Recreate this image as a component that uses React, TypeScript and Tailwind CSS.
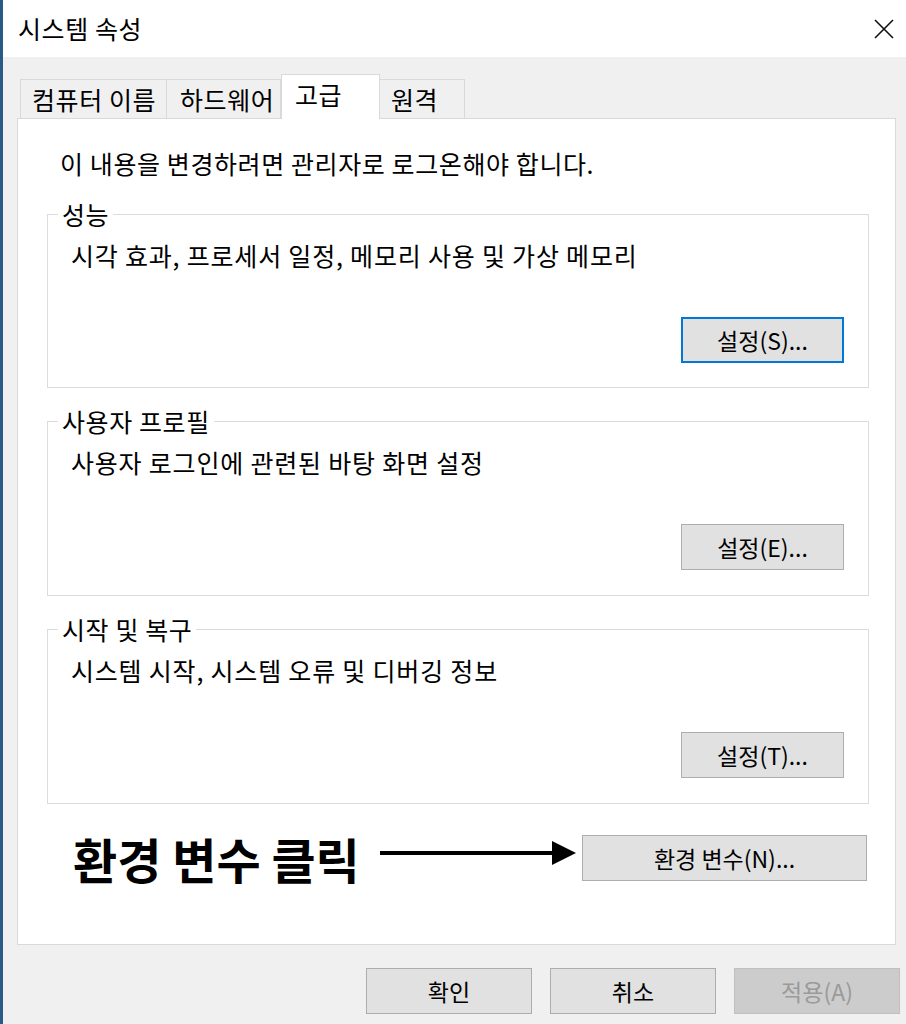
import React from 'react';

const tabs = [
  { label: '컴퓨터 이름', w: 'w-[147px]', pl: 'pl-[11px]' },
  { label: '하드웨어', w: 'w-[115px]', pl: 'pl-[13px]' },
];

const groups = [
  { title: '성능', desc: '시각 효과, 프로세서 일정, 메모리 사용 및 가상 메모리', btn: '설정(S)...', focused: true },
  { title: '사용자 프로필', desc: '사용자 로그인에 관련된 바탕 화면 설정', btn: '설정(E)...', focused: false },
  { title: '시작 및 복구', desc: '시스템 시작, 시스템 오류 및 디버깅 정보', btn: '설정(T)...', focused: false },
];

function WinButton({ label, focused, disabled, className }: { label: string; focused?: boolean; disabled?: boolean; className?: string }) {
  const base = 'flex items-center justify-center text-[23px] leading-none';
  const look = disabled
    ? 'bg-[#cccccc] border border-[#bfbfbf] text-[#9a9a9a]'
    : focused
      ? 'bg-[#e1e1e1] border-2 border-[#0078d7] text-black'
      : 'bg-[#e1e1e1] border border-[#adadad] text-black';
  return <div className={`${base} ${look} ${className ?? ''}`}>{label}</div>;
}

export default function App() {
  return (
    <div className="w-[906px] h-[1024px] overflow-hidden border-l-[3px] border-[#2b5a86] bg-[#f0f0f0] font-['Noto_Sans_CJK_KR','Noto_Sans',sans-serif] text-black">
      {/* Title bar */}
      <div className="h-[57px] bg-white flex items-center justify-between pl-[15px] pr-[10px]">
        <span className="text-[25px] leading-none tracking-[0.6px]">시스템 속성</span>
        <svg width="22" height="22" viewBox="0 0 22 22" className="mr-[1px]">
          <path d="M2 2 L20 20 M20 2 L2 20" stroke="#111" strokeWidth="1.6" />
        </svg>
      </div>

      {/* Tabs */}
      <div className="pt-[16px] pl-[17px] flex items-end h-[61px]">
        {tabs.map((t, i) => (
          <div
            key={t.label}
            className={`${t.w} ${t.pl} ${i > 0 ? '-ml-px' : ''} h-[39px] border border-b-0 border-[#d9d9d9] bg-[#f0f0f0] flex items-center text-[25px] leading-none tracking-[0.6px]`}
          >
            {t.label}
          </div>
        ))}
        <div className="relative z-10 w-[99px] h-[45px] -mb-px border border-b-0 border-[#d9d9d9] bg-white flex items-start pt-[5px] pl-[13px] text-[25px] leading-[28px] tracking-[0.6px]">
          고급
        </div>
        <div className="w-[86px] h-[39px] -ml-px border border-b-0 border-[#d9d9d9] bg-[#f0f0f0] flex items-center pl-[11px] text-[25px] leading-none tracking-[0.6px]">
          원격
        </div>
      </div>

      {/* Panel */}
      <div className="ml-[14px] w-[879px] h-[827px] bg-white border border-[#d9d9d9] pt-[28px] pl-[29px]">
        <p className="ml-[13px] text-[25px] leading-[32px] tracking-[0.6px]">이 내용을 변경하려면 관리자로 로그온해야 합니다.</p>

        {groups.map((g, i) => (
          <fieldset
            key={g.title}
            className={`${i === 0 ? 'mt-[19px] h-[190px]' : 'mt-[17px] h-[191px]'} w-[822px] border border-[#dcdcdc]`}
          >
            <legend className="ml-[10px] px-[4px] text-[25px] leading-[32px] tracking-[0.6px]">{g.title}</legend>
            <p className="mt-[9px] pl-[23px] text-[25px] leading-[32px] tracking-[0.8px]">{g.desc}</p>
            <div className="mt-[46px] flex justify-end pr-[24px]">
              <WinButton label={g.btn} focused={g.focused} className="w-[163px] h-[46px]" />
            </div>
          </fieldset>
        ))}

        {/* Annotation row */}
        <div className="mt-[30px] flex items-center">
          <div className="w-[333px] pl-[26px] text-[48px] font-bold leading-[48px]">환경 변수 클릭</div>
          <svg width="197" height="26" viewBox="0 0 197 26" className="-mt-[10px]">
            <line x1="0" y1="13" x2="178" y2="13" stroke="#000" strokeWidth="4" />
            <polygon points="172,1 196,13 172,25" fill="#000" />
          </svg>
          <WinButton label="환경 변수(N)..." className="ml-[5px] w-[285px] h-[46px]" />
        </div>
      </div>

      {/* Bottom buttons */}
      <div className="mt-[23px] flex justify-end gap-[18px] pr-[6px]">
        <WinButton label="확인" className="w-[166px] h-[46px]" />
        <WinButton label="취소" className="w-[166px] h-[46px]" />
        <WinButton label="적용(A)" disabled className="w-[166px] h-[46px]" />
      </div>
    </div>
  );
}
